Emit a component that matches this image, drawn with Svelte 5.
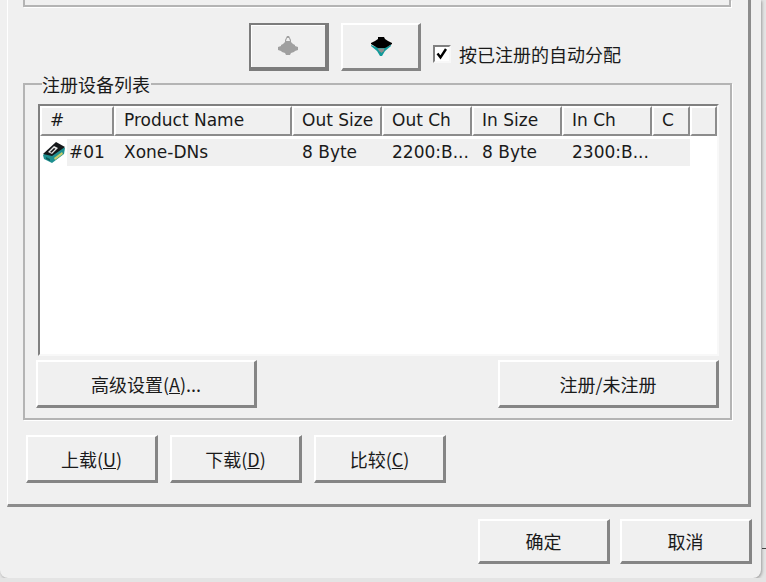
<script>
	const columns = [
		{ label: '#', width: 74 },
		{ label: 'Product Name', width: 178 },
		{ label: 'Out Size', width: 90 },
		{ label: 'Out Ch', width: 90 },
		{ label: 'In Size', width: 90 },
		{ label: 'In Ch', width: 90 },
		{ label: 'C', width: 38 },
		{ label: '', width: 27 }
	];

	const row = ['#01', 'Xone-DNs', '8 Byte', '2200:B...', '8 Byte', '2300:B...', ''];

	let autoAssign = $state(true);
</script>

<div class="window">
	<div class="tab-panel">
		<div class="top-group"></div>

		<div class="toolbar">
			<button class="btn icon-btn pressed" aria-label="上移">
				<svg width="24" height="22" viewBox="0 0 24 22">
					<path d="M11 1h2l2 4v2l2 2 2 1v1l3 1v3l-3 1-1 1-3 1-1 2h-4l-1-2-3-1-1-1-3-1v-3l3-1v-1l2-1 2-2v-2z" fill="#a0a0a0" />
					<path d="M11 3h2l1 3h-4z" fill="#f0f0f0" />
				</svg>
			</button>
			<button class="btn icon-btn raised" aria-label="下移">
				<svg width="24" height="22" viewBox="0 0 24 22">
					<path d="M2 9l5 2h10l5-2v1l-6 5-3 5h-2l-3-5-6-5z" fill="#109a9a" />
					<path d="M9 1h6l1 2 3 2 4 2v1l-5 3-2 1H9l-2-1-5-3v-1l4-2 3-2z" fill="#000" />
					<path d="M8.5 12.5h7l-1 3-1 .5-1 1-1-1-1-.5z" fill="#8f8f8f" />
				</svg>
			</button>
			<label class="check">
				<input type="checkbox" bind:checked={autoAssign} />
				<span class="check-box">
					{#if autoAssign}
						<svg width="14" height="14" viewBox="0 0 14 14">
							<path d="M2.5 6.5l3 4 5.5-8.5" fill="none" stroke="#000" stroke-width="2.4" />
						</svg>
					{/if}
				</span>
				<span>按已注册的自动分配</span>
			</label>
		</div>

		<fieldset class="group">
			<legend>注册设备列表</legend>
			<div class="list">
				<div class="list-head">
					{#each columns as col}
						<div class="head-cell" style="width: {col.width}px">{col.label}</div>
					{/each}
				</div>
				<div class="list-row">
					<svg class="row-icon" width="24" height="24" viewBox="0 0 24 24">
						<path d="M1 15l13-12 9 5-1 6-12 9-8-4z" fill="#1f9090" />
						<path d="M1 14L14 2l9 5-13 9z" fill="#15181a" />
						<path d="M6 12l6-6 4 2-6 6z" fill="#e8e8e8" />
						<path d="M8 12l4-4 1.500.8-4 4z" fill="#15181a" />
						<path d="M12 18l8-6 1 2-8 6z" fill="#c6cc6a" />
						<path d="M4 17l4 2v2l-4-2z" fill="#0d5e5e" />
					</svg>
					<div class="row-cells">
						{#each row as cell, i}
							<div class="cell" style="width: {i === 0 ? 47 : columns[i].width}px">{cell}</div>
						{/each}
					</div>
				</div>
			</div>
			<div class="group-actions">
				<button class="btn wide raised">高级设置(<u>A</u>)...</button>
				<button class="btn wide raised">注册/未注册</button>
			</div>
		</fieldset>

		<div class="transfer">
			<button class="btn action raised">上载(<u>U</u>)</button>
			<button class="btn action raised">下载(<u>D</u>)</button>
			<button class="btn action raised">比较(<u>C</u>)</button>
		</div>
	</div>

	<div class="footer">
		<button class="btn dialog raised">确定</button>
		<button class="btn dialog raised">取消</button>
	</div>
</div>
<div class="behind-line"></div>

<style>
	:global(body) {
		background: #e4e4e4;
	}

	.window {
		box-sizing: border-box;
		width: 761px;
		height: 578px;
		padding: 0 0 0 7px;
		background: #f0f0f0;
		border-radius: 0 0 8px 8px;
		box-shadow: 1px 1px 3px #9c9c9c;
		font-family: 'Noto Sans CJK SC', 'Noto Sans', sans-serif;
		font-size: 18px;
		color: #1a1a1a;
		overflow: hidden;
	}

	.behind-line {
		position: absolute;
		left: 762px;
		top: 548px;
		width: 4px;
		height: 1px;
		background: #404040;
	}

	.tab-panel {
		box-sizing: border-box;
		width: 744px;
		height: 507px;
		padding: 0 19px 0 15px;
		border-left: 1px solid #fff;
		border-right: 3px solid #8c8c8c;
		border-bottom: 3px solid #8c8c8c;
	}

	.top-group {
		box-sizing: border-box;
		width: 708px;
		height: 7px;
		border: 2px solid #b4b4b4;
		border-top: 0;
		box-shadow: 1px 1px 0 #fff;
	}

	.toolbar {
		display: flex;
		align-items: flex-start;
		gap: 12px;
		padding: 16px 0 0 226px;
		height: 68px;
		box-sizing: border-box;
	}

	.btn {
		box-sizing: border-box;
		padding: 0;
		margin: 0;
		font: inherit;
		color: inherit;
		background: #f0f0f0;
		border: 2px solid;
		border-color: #fff #858585 #858585 #fff;
		border-right-width: 3px;
		border-bottom-width: 3px;
		border-radius: 0;
		display: flex;
		align-items: center;
		justify-content: center;
	}

	.icon-btn {
		width: 80px;
		height: 48px;
	}

	.pressed {
		border-color: #7c7c7c;
		border-bottom-width: 4px;
		border-right-width: 4px;
		box-shadow: inset 1px 1px 0 #fff;
	}

	.check {
		display: flex;
		align-items: center;
		gap: 8px;
		margin-top: 18px;
	}

	.check input {
		position: absolute;
		opacity: 0;
		width: 0;
		height: 0;
	}

	.check-box {
		box-sizing: border-box;
		width: 18px;
		height: 18px;
		background: #fff;
		border: 2px solid #808080;
		border-right-color: #f8f8f8;
		border-bottom-color: #f8f8f8;
		display: flex;
		align-items: center;
		justify-content: center;
	}

	.group {
		box-sizing: border-box;
		width: 708px;
		height: 345px;
		margin: 0;
		padding: 11px 11px 0 13px;
		border: 2px solid #b4b4b4;
		box-shadow: 1px 1px 0 #fff;
	}

	legend {
		margin-left: 4px;
		padding: 0 1px 0 0;
		line-height: 18px;
	}

	.list {
		box-sizing: border-box;
		width: 681px;
		height: 252px;
		background: #fff;
		border-top: 2px solid #808080;
		border-left: 2px solid #808080;
		border-right: 2px solid #f8f8f8;
		border-bottom: 2px solid #f8f8f8;
	}

	.list-head {
		display: flex;
		height: 30px;
	}

	.head-cell {
		box-sizing: border-box;
		flex: none;
		height: 30px;
		padding-left: 8px;
		background: #f0f0f0;
		border: 2px solid;
		border-color: #fff #8c8c8c #8c8c8c #fff;
		line-height: 25px;
		font-family: 'DejaVu Sans', sans-serif;
		font-size: 17px;
		white-space: nowrap;
	}

	.list-row {
		display: flex;
		height: 30px;
		padding-top: 3px;
		box-sizing: border-box;
	}

	.row-icon {
		flex: none;
		margin: 1px 1px 0 2px;
	}

	.row-cells {
		display: flex;
		height: 27px;
		background: #f0f0f0;
	}

	.cell {
		box-sizing: border-box;
		flex: none;
		padding-left: 2px;
		line-height: 27px;
		font-family: 'DejaVu Sans', sans-serif;
		font-size: 17px;
		white-space: nowrap;
	}

	.cell + .cell {
		padding-left: 10px;
	}

	.group-actions {
		display: flex;
		justify-content: space-between;
		width: 683px;
		margin: 4px 0 0 -2px;
	}

	.wide {
		height: 48px;
		width: 221px;
	}

	.transfer {
		display: flex;
		gap: 12px;
		padding: 15px 0 0 3px;
	}

	.action {
		width: 132px;
		height: 48px;
	}

	.footer {
		display: flex;
		justify-content: flex-end;
		gap: 10px;
		padding: 12px 9px 0 0;
	}

	.dialog {
		width: 132px;
		height: 45px;
	}
</style>
